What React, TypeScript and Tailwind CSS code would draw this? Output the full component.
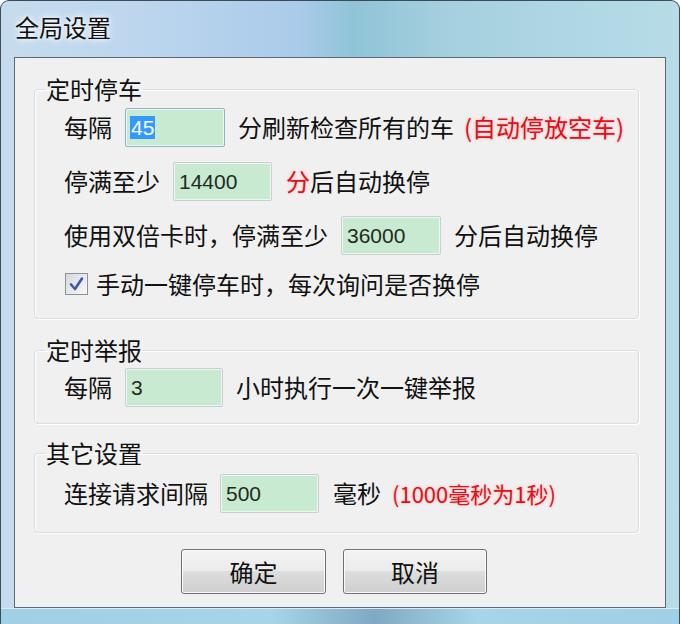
import React from 'react';

const FONT = "font-['Noto_Sans_CJK_SC','Noto_Sans',sans-serif]";

function Field({ value, width, selected }: { value: string; width: string; selected?: boolean }) {
  return (
    <div
      className={`${width} h-[39px] shrink-0 flex items-center pl-[4px] rounded-[2px] border bg-[#c7ead0] shadow-[inset_0_0_0_1px_#eef6f1] ${
        selected ? 'border-[#8fb3d2]' : 'border-[#c9ced3]'
      }`}
    >
      {selected ? (
        <span className="px-[1px] bg-[#3399ff] text-white text-[21px] leading-[23px] font-['Liberation_Sans',sans-serif]">
          {value}
        </span>
      ) : (
        <span className="pl-[1px] text-[#1f2a22] text-[21px] leading-[23px] font-['Liberation_Sans',sans-serif]">
          {value}
        </span>
      )}
    </div>
  );
}

function Group({ title, className, children }: { title: string; className: string; children: React.ReactNode }) {
  return (
    <fieldset
      className={`w-[605px] ml-[19px] border border-[#d6dde3] rounded-[4px] shadow-[inset_1px_1px_0_#ffffff,1px_1px_0_#ffffff] ${className}`}
    >
      <legend className="ml-[10px] px-[1px] text-[24px] leading-[24px] text-[#111]">{title}</legend>
      <div className="pl-[29px]">{children}</div>
    </fieldset>
  );
}

const red = 'text-[#de1019] [text-shadow:0_0_3px_rgba(255,120,120,0.55)]';

export default function App() {
  return (
    <div
      className={`${FONT} w-[680px] h-[624px] overflow-hidden rounded-t-[9px] border-t border-x border-[#3d4b57] bg-[linear-gradient(90deg,#c6dcee_0%,#bdd6ee_20%,#aacbea_44%,#8fc4d7_52%,#a6d0df_66%,#b7dce8_100%)]`}
    >
      {/* title bar */}
      <div className="h-[56px] flex items-center pl-[14px] pb-[4px]">
        <span className="text-[24px] leading-[28px] text-[#111] [text-shadow:0_0_8px_#ffffff,0_0_4px_#ffffff]">
          全局设置
        </span>
      </div>

      {/* client area */}
      <div className="mx-[13px] h-[551px] border border-[#5a6977] bg-[#f0f0f0] text-[24px] text-[#111]">
        <Group title="定时停车" className="mt-[19px] pb-[22px]">
          <div className="mt-[6px] h-[40px] flex items-center gap-[13px]">
            <span className="leading-[24px]">每隔</span>
            <Field value="45" width="w-[100px]" selected />
            <span className="leading-[24px]">
              分刷新检查所有的车<span className={`ml-[10px] ${red}`}>(自动停放空车)</span>
            </span>
          </div>
          <div className="mt-[14px] h-[40px] flex items-center gap-[13px]">
            <span className="leading-[24px]">停满至少</span>
            <Field value="14400" width="w-[99px]" />
            <span className="leading-[24px] ml-[1px]">
              <span className={red}>分</span>后自动换停
            </span>
          </div>
          <div className="mt-[14px] h-[40px] flex items-center gap-[13px]">
            <span className="leading-[24px]">使用双倍卡时，停满至少</span>
            <Field value="36000" width="w-[100px]" />
            <span className="leading-[24px]">分后自动换停</span>
          </div>
          <div className="mt-[17px] h-[24px] flex items-center gap-[8px]">
            <div className="ml-[1px] w-[23px] h-[22px] border border-[#8e9196] bg-[linear-gradient(135deg,#d6d9de,#f7f8f9)] flex items-center justify-center">
              <svg width="17" height="16" viewBox="0 0 17 16">
                <path d="M3 8.5 L7 13 L14 2.5" fill="none" stroke="#3b5aa3" strokeWidth="2.6" strokeLinejoin="round" strokeLinecap="round" />
              </svg>
            </div>
            <span className="leading-[24px]">手动一键停车时，每次询问是否换停</span>
          </div>
        </Group>

        <Group title="定时举报" className="mt-[19px] pb-[17px]">
          <div className="mt-[6px] h-[38px] flex items-center gap-[13px]">
            <span className="leading-[24px]">每隔</span>
            <Field value="3" width="w-[98px]" />
            <span className="leading-[24px]">小时执行一次一键举报</span>
          </div>
        </Group>

        <Group title="其它设置" className="mt-[17px] pb-[20px]">
          <div className="mt-[9px] h-[38px] flex items-center gap-[12px]">
            <span className="leading-[24px]">连接请求间隔</span>
            <Field value="500" width="w-[99px]" />
            <span className="leading-[24px] ml-[2px]">
              毫秒<span className={`ml-[11px] text-[22px] ${red}`}>(1000毫秒为1秒)</span>
            </span>
          </div>
        </Group>

        <div className="mt-[16px] ml-[166px] flex gap-[17px]">
          <button className="w-[145px] h-[45px] rounded-[3px] border border-[#707070] shadow-[inset_0_0_0_1px_#fbfbfb] bg-[linear-gradient(180deg,#f3f3f3_0%,#ebebeb_50%,#dddddd_50%,#cfcfcf_100%)] text-[24px] leading-[24px] text-[#111]">
            确定
          </button>
          <button className="w-[144px] h-[45px] rounded-[3px] border border-[#707070] shadow-[inset_0_0_0_1px_#fbfbfb] bg-[linear-gradient(180deg,#f3f3f3_0%,#ebebeb_50%,#dddddd_50%,#cfcfcf_100%)] text-[24px] leading-[24px] text-[#111]">
            取消
          </button>
        </div>
      </div>

      {/* bottom frame */}
      <div className="h-[17px] bg-[linear-gradient(90deg,#9fd0e6_0%,#a7d4e8_40%,#7fa9c2_55%,#a7d4e8_70%,#9fd0e6_100%)] border-t border-[#d8eef7]" />
    </div>
  );
}
